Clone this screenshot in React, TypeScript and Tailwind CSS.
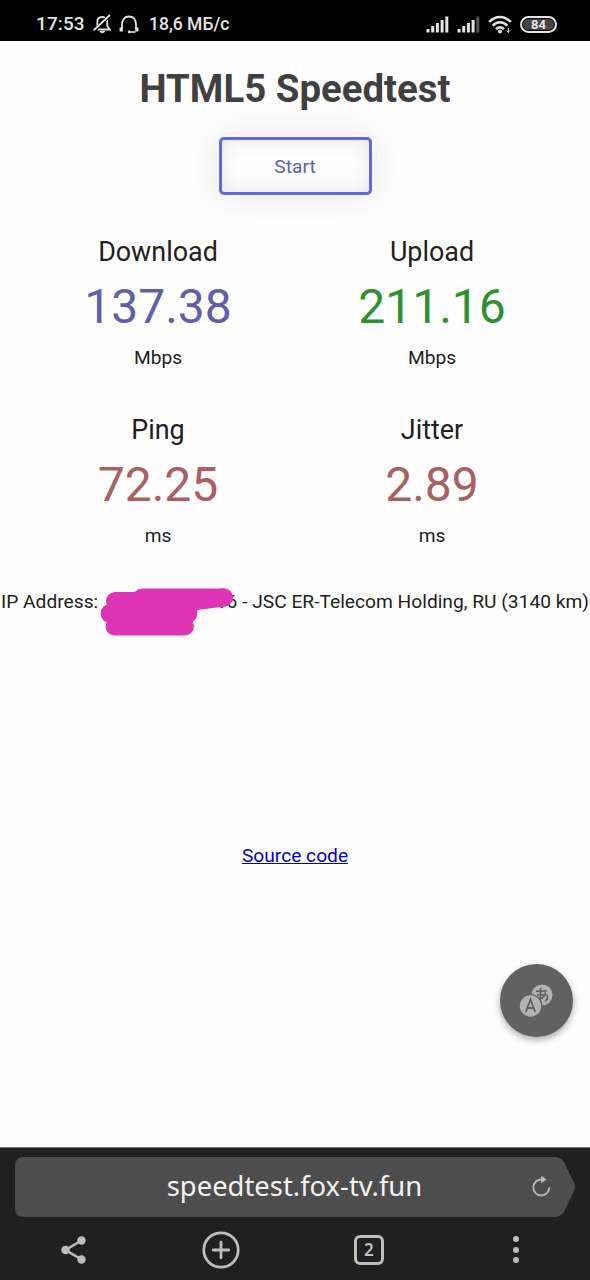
import { clsx } from 'clsx'

interface Metric {
  name: string
  value: string
  unit: string
  color: string
}

const metrics: Metric[] = [
  { name: 'Download', value: '137.38', unit: 'Mbps', color: 'text-[#6060aa]' },
  { name: 'Upload', value: '211.16', unit: 'Mbps', color: 'text-[#309030]' },
  { name: 'Ping', value: '72.25', unit: 'ms', color: 'text-[#aa6060]' },
  { name: 'Jitter', value: '2.89', unit: 'ms', color: 'text-[#aa6060]' },
]

function Signal({ weak = false }: { weak?: boolean }) {
  const heights = [3.5, 6.5, 9.5, 12.5, 16]
  return (
    <svg width="23" height="17" viewBox="0 0 23 17" fill="#e4e4e4">
      {heights.map((h, i) => (
        <rect key={i} x={0.5 + i * 4.7} y={16.5 - h} width="3" height={h} fill={weak && i === 4 ? '#555' : '#e4e4e4'} />
      ))}
    </svg>
  )
}

function StatusBar() {
  return (
    <header className="flex h-[41px] items-center bg-black pt-[7px] pl-[36px] pr-[33px] text-[#e4e4e4]">
      <span className="w-[57px] text-[19px] font-medium leading-6 tracking-[0.1px]">17:53</span>
      <svg width="19" height="20" viewBox="0 0 19 20" fill="none" stroke="#e4e4e4" strokeWidth="1.8">
        <path d="M4.3 13V8.5C4.3 5 6.3 3 9.3 3c3 0 5 2 5 5.500V12l2.500 3.500H2L4.300 13" />
        <path d="M16.500 1.500L1.500 16.500" stroke="#000" strokeWidth="3.500" />
        <path d="M17 1L1 16" />
        <path d="M6.500 17h5.600c-.6 1.500-1.600 2.200-2.800 2.200s-2.200-.7-2.800-2.200z" fill="#e4e4e4" stroke="none" />
      </svg>
      <svg className="ml-[7px]" width="20" height="19" viewBox="0 0 20 19" fill="none" stroke="#e4e4e4" strokeWidth="1.8">
        <path d="M3 14V9.500C3 4.500 5.800 1.500 10 1.500s7 3 7 8V14" />
        <path d="M2.200 12.500v4M17.800 12.500v4" strokeWidth="3.200" />
        <path d="M16.500 17h-6" strokeWidth="1.600" />
        <circle cx="10.300" cy="16.800" r="1.500" fill="#e4e4e4" stroke="none" />
      </svg>
      <span className="ml-[10px] text-[17.5px] font-medium leading-6">18,6 МБ/с</span>
      <div className="ml-auto flex items-center">
        <Signal />
        <span className="ml-[8px] flex"><Signal weak /></span>
        <svg className="ml-[8px]" width="24" height="19" viewBox="0 0 24 19" fill="none" stroke="#e4e4e4" strokeWidth="2.500">
          <path d="M1.200 7c6-6.800 15.600-6.800 21.600 0" />
          <path d="M4.700 10.700c4.300-4.500 10.300-4.500 14.600 0" />
          <path d="M8 14.200c2.500-2.400 5.500-2.400 8 0" />
          <circle cx="12" cy="16.500" r="2" fill="#e4e4e4" stroke="none" />
          <path d="M20.300 13v4.500M18.800 15.500l1.500 2 1.500-2" strokeWidth="1" />
        </svg>
        <div className="ml-[8px] flex h-[17px] w-[37px] items-center justify-center rounded-full border-2 border-[#e4e4e4] bg-black p-[1px]">
          <span className="flex h-full w-full items-center justify-center rounded-full bg-[#444] text-[13px] font-bold leading-none">84</span>
        </div>
      </div>
    </header>
  )
}

function MetricCell({ metric }: { metric: Metric }) {
  return (
    <div className="flex h-[178px] w-[274px] flex-col items-center">
      <div className="text-[26.900px] leading-8">{metric.name}</div>
      <div className={clsx('mt-[11px] text-[48px] leading-[56px]', metric.color)}>{metric.value}</div>
      <div className="mt-[11px] text-[19.200px] leading-6">{metric.unit}</div>
    </div>
  )
}

function IpLine() {
  return (
    <div className="relative flex h-6 justify-between whitespace-pre pl-[1px] pr-[1px] text-[19.200px] leading-6">
      <span>IP Address: </span>
      <span>116 - JSC ER-Telecom Holding, RU (3140 km)</span>
      <svg className="absolute top-[-2px] left-[98px]" width="138" height="50" viewBox="0 0 138 50" fill="none" stroke="#dd35b5" strokeLinecap="round" strokeLinejoin="round">
        <path d="M44 9.500H126" strokeWidth="18" />
        <path d="M17 13H98L126 9.500" strokeWidth="18" />
        <path d="M12 25.500H90" strokeWidth="19" />
        <path d="M16.500 38.500H87" strokeWidth="18" />
        <path d="M20 19H92" strokeWidth="16" />
      </svg>
    </div>
  )
}

function TranslateButton() {
  return (
    <button className="absolute top-[964px] left-[500px] flex size-[73px] items-center justify-center rounded-full bg-[#616161] shadow-[0_3px_7px_rgba(0,0,0,0.35)]">
      <svg className="mr-[2px]" width="35" height="35" viewBox="0 0 35 35" fill="none">
        <circle cx="24" cy="12" r="10.500" fill="#b2b2b2" />
        <path d="M18 8.200c4 .3 8 0 11-.8M22.500 5v10.500M19 12h9.500c2 2 1 4.500-1.500 6M27.500 9.500c-1 4-4 7-7.500 7" stroke="#616161" strokeWidth="1.600" />
        <circle cx="12.500" cy="23" r="12" fill="#616161" />
        <circle cx="12.500" cy="23" r="10.700" fill="#b2b2b2" />
        <path d="M7.700 29L12.500 16.500 17.300 29M9.200 25h6.600" stroke="#616161" strokeWidth="1.800" />
      </svg>
    </button>
  )
}

function BrowserBar() {
  return (
    <footer className="h-[133px] border-t border-[#777] bg-[#202020] pt-[9px] font-['Noto_Sans',sans-serif]">
      <div className="relative ml-[15px] flex h-[60px] w-[561px] items-center">
        <svg className="absolute inset-0" width="561" height="60" viewBox="0 0 561 60">
          <path d="M9 0H540Q545 0 549 5L559 26Q561 30 559 34L549 55Q545 60 540 60H9Q0 60 0 51V9Q0 0 9 0Z" fill="#4d4d4d" />
        </svg>
        <span className="relative -mt-[3px] w-full pr-[2px] text-center text-[27.400px] leading-9 text-[#f2f2f2]">speedtest.fox-tv.fun</span>
        <svg className="absolute top-[18px] left-[517px]" width="20" height="22" viewBox="0 0 20 22" fill="none" stroke="#b8b8b8" strokeWidth="1.900">
          <path d="M17.300 12.500A8 8 0 1 1 9.500 4.500h2" />
          <path d="M9.200 0.500L14.500 4.500 9.200 8.500z" fill="#b8b8b8" stroke="none" />
        </svg>
      </div>
      <nav className="flex h-[62px] items-center pt-[3px]">
        <div className="flex w-1/4 justify-center">
          <svg width="26" height="28" viewBox="0 0 26 28" fill="#bdbdbd">
            <path d="M20.500 4.500L4.500 14l16 9.500" fill="none" stroke="#bdbdbd" strokeWidth="2.600" />
            <circle cx="20.500" cy="4.500" r="4.200" />
            <circle cx="4.500" cy="14" r="4.200" />
            <circle cx="20.500" cy="23.500" r="4.200" />
          </svg>
        </div>
        <div className="flex w-1/4 justify-center">
          <svg width="38" height="38" viewBox="0 0 38 38" fill="none" stroke="#bdbdbd" strokeWidth="2.800" strokeLinecap="round">
            <circle cx="19" cy="19" r="17.200" />
            <path d="M11.200 19h15.600M19 11.200v15.600" />
          </svg>
        </div>
        <div className="flex w-1/4 justify-center">
          <div className="flex size-[30px] items-center justify-center rounded-[6px] border-[3px] border-[#bdbdbd] text-[17px] font-semibold leading-none text-[#bdbdbd]">2</div>
        </div>
        <div className="flex w-1/4 flex-col items-center gap-[4.500px]">
          <span className="size-[6px] rounded-full bg-[#bdbdbd]" />
          <span className="size-[6px] rounded-full bg-[#bdbdbd]" />
          <span className="size-[6px] rounded-full bg-[#bdbdbd]" />
        </div>
      </nav>
    </footer>
  )
}

export default function App() {
  return (
    <div className="relative flex h-[1280px] w-[590px] flex-col overflow-hidden bg-[#fefefe] font-[Roboto,sans-serif] text-[#212121]">
      <StatusBar />
      <main className="flex flex-1 flex-col">
        <h1 className="mt-[25px] text-center text-[38.400px] font-bold leading-[46px] text-[#404040]">HTML5 Speedtest</h1>
        <button className="mx-auto mt-[25px] h-[58px] w-[153px] rounded-[5px] border-[3px] border-[#6666dd] pt-[2px] text-[19.200px] text-[#6060aa] shadow-[0_0_38px_rgba(0,0,0,0.1),inset_0_0_19px_rgba(0,0,0,0.1)]">
          Start
        </button>
        <div className="mx-auto mt-[41px] flex w-[548px] flex-wrap">
          {metrics.map(m => <MetricCell key={m.name} metric={m} />)}
        </div>
        <div className="-mt-[2px]">
          <IpLine />
        </div>
        <a className="mx-auto mt-[230px] text-[19.200px] leading-6 text-[#0000cc] underline" href="#">Source code</a>
      </main>
      <TranslateButton />
      <BrowserBar />
    </div>
  )
}
